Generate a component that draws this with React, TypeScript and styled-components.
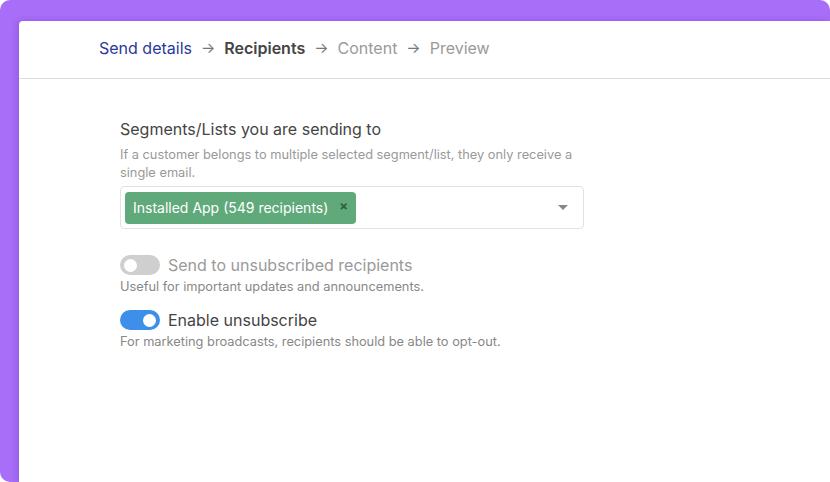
import React from "react";
import styled, { createGlobalStyle } from "styled-components";

const Global = createGlobalStyle`
  html, body { margin: 0; padding: 0; background: #ffffff; }
  body { font-family: Inter, "Noto Sans", sans-serif; -webkit-font-smoothing: antialiased; }
  * { box-sizing: border-box; }
`;

const Frame = styled.div`
  width: 830px;
  height: 482px;
  background: #a96ef8;
  border-radius: 10px 10px 0 10px;
  padding: 21px 0 0 19px;
  overflow: hidden;
  display: flex;
`;

const Panel = styled.div`
  flex: 1;
  background: #ffffff;
  border-top-left-radius: 4px;
  box-shadow: -2px 0 6px rgba(80, 30, 160, 0.25);
  display: flex;
  flex-direction: column;
`;

const Header = styled.nav`
  height: 58px;
  border-bottom: 1px solid #dcdcdc;
  display: flex;
  align-items: center;
  padding: 0 0 4px 80px;
  gap: 9px;
  font-size: 16px;
`;

const Step = styled.span<{ $state: "done" | "current" | "todo" }>`
  color: ${(p) => (p.$state === "done" ? "#2a389a" : p.$state === "current" ? "#444444" : "#9a9a9a")};
  font-weight: ${(p) => (p.$state === "current" ? 600 : 400)};
`;

const Arrow = styled.span`
  color: #777;
  font-size: 15px;
`;

const Body = styled.div`
  padding: 40px 0 0 101px;
  display: flex;
  flex-direction: column;
`;

const Label = styled.div`
  font-size: 16px;
  color: #444;
  line-height: 20px;
`;

const Help = styled.div`
  font-size: 12.8px;
  color: #999;
  line-height: 18px;
  width: 470px;
  margin-top: 7px;
`;

const Select = styled.div`
  margin-top: 4px;
  width: 464px;
  height: 43px;
  border: 1px solid #e2e2e2;
  border-radius: 4px;
  display: flex;
  align-items: center;
  padding: 0 15px 0 4px;
  justify-content: space-between;
`;

const Chip = styled.div`
  height: 32px;
  background: #60a97a;
  border-radius: 4px;
  color: #fff;
  font-size: 14px;
  display: flex;
  align-items: center;
  padding: 0 8px 0 8px;
`;

const ChipX = styled.span`
  color: #2f5e3f;
  font-size: 13px;
  font-weight: 700;
  margin-left: 11px;
  margin-bottom: 4px;
`;

const Caret = styled.div`
  width: 0;
  height: 0;
  border-left: 5px solid transparent;
  border-right: 5px solid transparent;
  border-top: 5px solid #888;
`;

const ToggleRow = styled.div<{ $top: number }>`
  display: flex;
  align-items: center;
  gap: 8px;
  margin-top: ${(p) => p.$top}px;
`;

const Toggle = styled.div<{ $on: boolean }>`
  width: 40px;
  height: 20px;
  border-radius: 10px;
  background: ${(p) => (p.$on ? "#3d8fea" : "#cfcfcf")};
  display: flex;
  align-items: center;
  justify-content: ${(p) => (p.$on ? "flex-end" : "flex-start")};
  padding: 0 4px;
`;

const Knob = styled.div`
  width: 13px;
  height: 13px;
  border-radius: 50%;
  background: #fff;
`;

const ToggleLabel = styled.span<{ $muted: boolean }>`
  font-size: 16px;
  color: ${(p) => (p.$muted ? "#9a9a9a" : "#444")};
`;

const ToggleHelp = styled.div`
  font-size: 12.8px;
  color: #888;
  line-height: 18px;
  margin-top: 3px;
`;

export default function App() {
  return (
    <>
      <Global />
      <Frame>
        <Panel>
          <Header>
            <Step $state="done">Send details</Step>
            <Arrow>→</Arrow>
            <Step $state="current">Recipients</Step>
            <Arrow>→</Arrow>
            <Step $state="todo">Content</Step>
            <Arrow>→</Arrow>
            <Step $state="todo">Preview</Step>
          </Header>
          <Body>
            <Label>Segments/Lists you are sending to</Label>
            <Help>
              If a customer belongs to multiple selected segment/list, they only receive a single email.
            </Help>
            <Select>
              <Chip>
                Installed App (549 recipients)
                <ChipX>×</ChipX>
              </Chip>
              <Caret />
            </Select>
            <ToggleRow $top={26}>
              <Toggle $on={false}>
                <Knob />
              </Toggle>
              <ToggleLabel $muted>Send to unsubscribed recipients</ToggleLabel>
            </ToggleRow>
            <ToggleHelp>Useful for important updates and announcements.</ToggleHelp>
            <ToggleRow $top={14}>
              <Toggle $on>
                <Knob />
              </Toggle>
              <ToggleLabel $muted={false}>Enable unsubscribe</ToggleLabel>
            </ToggleRow>
            <ToggleHelp>For marketing broadcasts, recipients should be able to opt-out.</ToggleHelp>
          </Body>
        </Panel>
      </Frame>
    </>
  );
}
